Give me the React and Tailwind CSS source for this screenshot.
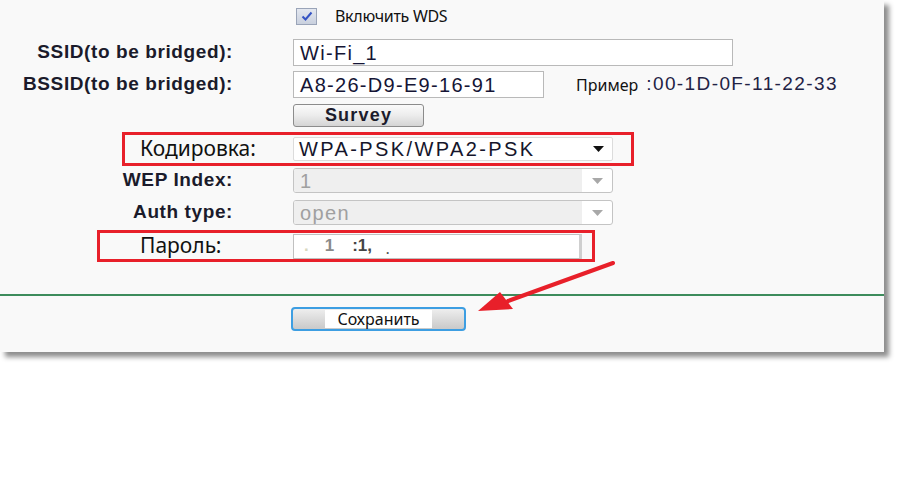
import React from "react";

const arial = "font-['Liberation_Sans',Arial,sans-serif]";
const segoe = "font-['Noto_Sans','Open_Sans',sans-serif]";

function Label({ children }) {
  return (
    <span
      className={`${arial} w-[233px] shrink-0 text-right text-[19px] font-bold tracking-[0.6px] text-[#1b1b2b]`}
    >
      {children}
    </span>
  );
}

function Caret({ muted }) {
  return (
    <svg width="11" height="6" viewBox="0 0 11 6">
      <path d="M0 0h11L5.5 6z" fill={muted ? "#a8a8a8" : "#111"} />
    </svg>
  );
}

function DisabledSelect({ value }) {
  return (
    <div className="ml-[60px] flex h-[25px] w-[320px] overflow-hidden rounded-[3px] border border-[#c4c4c4] bg-white">
      <div
        className={`${arial} flex flex-1 items-center bg-[#efefef] pl-[6px] text-[20px] tracking-[1.4px] text-[#a0a0a0]`}
      >
        {value}
      </div>
      <div className="flex w-[30px] items-center justify-center">
        <Caret muted />
      </div>
    </div>
  );
}

export default function App() {
  return (
    <div className="relative h-[500px] w-[900px] bg-white">
      <div className="flex h-[352px] w-[884px] flex-col bg-[#f9f9f9] pt-[7px] shadow-[5px_5px_5px_rgba(0,0,0,0.45)]">
        {/* WDS toggle */}
        <div className="flex h-[18px] items-center pl-[296px]">
          <div className="flex h-[17px] w-[21px] items-center justify-center border border-[#9aa4b8] bg-gradient-to-b from-[#e4e8f0] to-[#c9d0de]">
            <svg width="12" height="10" viewBox="0 0 12 10">
              <path d="M1.5 5.5l3 3L10.5 1.5" fill="none" stroke="#3553c4" strokeWidth="2" />
            </svg>
          </div>
          <span className={`${segoe} ml-[18px] text-[16px] tracking-[-0.3px] text-[#111]`}>Включить WDS</span>
        </div>

        <div className="mt-[14px] flex h-[27px] items-center">
          <Label>SSID(to be bridged):</Label>
          <div
            className={`${arial} ml-[60px] flex h-[27px] w-[440px] items-center border border-[#b9b9b9] bg-white pl-[6px] text-[20px] tracking-[1.3px] text-[#151535]`}
          >
            Wi-Fi_1
          </div>
        </div>

        <div className="mt-[5px] flex h-[27px] items-center">
          <Label>BSSID(to be bridged):</Label>
          <div
            className={`${arial} ml-[60px] flex h-[27px] w-[251px] items-center border border-[#b9b9b9] bg-white pl-[6px] text-[20px] tracking-[1.3px] text-[#151535]`}
          >
            A8-26-D9-E9-16-91
          </div>
          <span className={`${segoe} ml-[32px] text-[16px] text-[#111]`}>Пример</span>
          <span className={`${arial} ml-[8px] text-[19px] tracking-[1.4px] text-[#222244]`}>:00-1D-0F-11-22-33</span>
        </div>

        <div className="mt-[6px] flex h-[23px] pl-[293px]">
          <button
            className={`${arial} flex h-[23px] w-[131px] items-center justify-center rounded-[3px] border border-[#8c8c8c] bg-gradient-to-b from-[#fbfbfb] via-[#ececec] to-[#d4d4d4] text-[18px] font-bold tracking-[1.2px] text-[#1c1c2c]`}
          >
            Survey
          </button>
        </div>

        {/* encryption row, boxed in red */}
        <div className="ml-[122px] mt-[5px] flex h-[34px] w-[512px] items-center border-[3px] border-[#e8202a]">
          <span className={`${segoe} w-[168px] shrink-0 pl-[15px] text-[21px] text-[#111]`}>Кодировка:</span>
          <div className="flex h-[24px] w-[320px] items-center justify-between rounded-[2px] border border-[#dcdcdc] bg-white pl-[5px] pr-[8px]">
            <span className={`${arial} text-[20px] tracking-[2.4px] text-[#15152b]`}>WPA-PSK/WPA2-PSK</span>
            <Caret />
          </div>
        </div>

        <div className="mt-[2px] flex h-[25px] items-center">
          <Label>WEP Index:</Label>
          <DisabledSelect value="1" />
        </div>

        <div className="mt-[7px] flex h-[25px] items-center">
          <Label>Auth type:</Label>
          <DisabledSelect value="open" />
        </div>

        {/* password row, boxed in red */}
        <div className="ml-[97px] mt-[5px] flex h-[32px] w-[498px] items-center border-[3px] border-[#e8202a]">
          <span className={`${segoe} w-[193px] shrink-0 pl-[40px] text-[21px] text-[#111]`}>Пароль:</span>
          <div className="flex h-[25px] w-[289px] items-center border border-[#c0c0c0] border-r-[3px] border-r-[#cfcfcf] bg-white pl-[10px]">
            <span className={`${arial} text-[17px] font-bold text-[#d8d8c0]`}>.</span>
            <span className={`${arial} ml-[16px] text-[17px] font-bold text-[#8a8a8a]`}>1</span>
            <span className={`${arial} ml-[18px] text-[17px] font-bold text-[#444]`}>:1,</span>
            <span className={`${arial} ml-[14px] mt-[8px] text-[12px] font-bold text-[#555]`}>.</span>
          </div>
        </div>

        <div className="mt-[32px] h-[2px] w-full bg-[#3d8c5c]" />

        <div className="mt-[11px] flex pl-[291px]">
          <button className="flex h-[24px] w-[175px] items-center justify-center rounded-[4px] border-2 border-[#3d9ee2] bg-gradient-to-b from-[#eeeeee] to-[#c9c9c9]">
            <span className={`${segoe} flex h-[18px] items-center bg-white px-[12px] text-[16px] text-[#111]`}>
              Сохранить
            </span>
          </button>
        </div>
      </div>

      {/* pointer arrow towards the save button */}
      <svg className="absolute left-[470px] top-[255px]" width="150" height="62" viewBox="0 0 150 62">
        <path d="M143 8L38 46" stroke="#e8202a" strokeWidth="4" strokeLinecap="round" />
        <path d="M8 56L30 37L43 54z" fill="#e8202a" />
      </svg>
    </div>
  );
}
